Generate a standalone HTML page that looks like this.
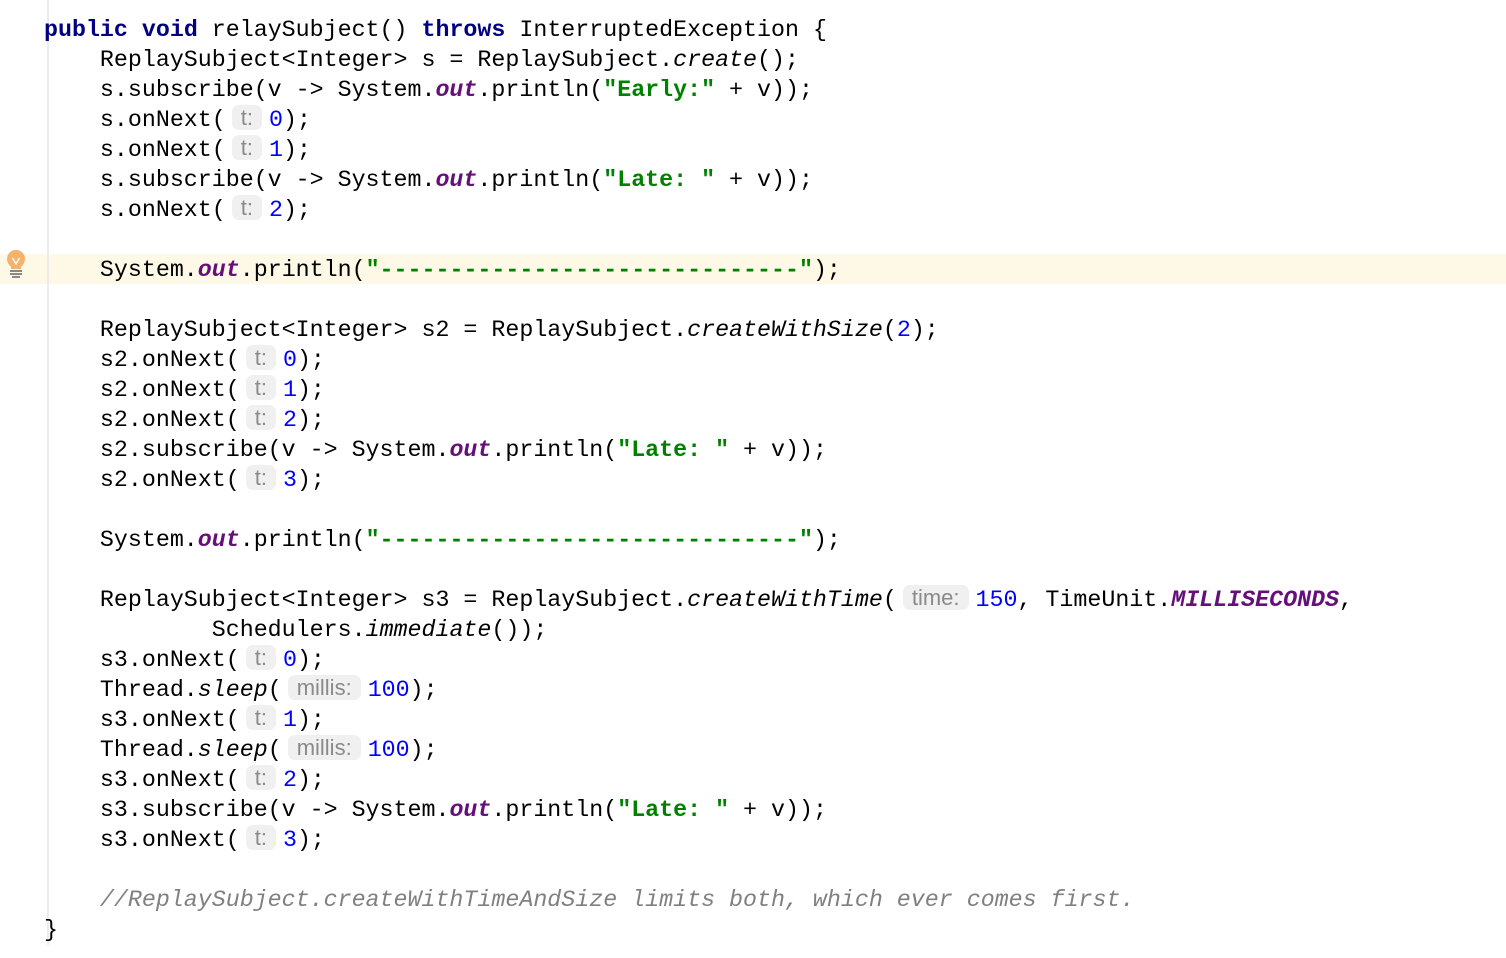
<!DOCTYPE html>
<html><head><meta charset="utf-8"><style>
html,body{margin:0;padding:0;background:#fff;width:1506px;height:958px;overflow:hidden}
.g{position:absolute;left:47px;top:0;width:2px;height:945px;background:#ececec}
.hl{position:absolute;left:0;top:254px;width:1506px;height:30px;background:#fdf9e6}
pre{position:absolute;left:44px;top:15px;margin:0;font-family:"Liberation Mono",monospace;font-size:23.3px;line-height:30px;color:#000}
.k{color:#000080;font-weight:bold}
.n{color:#0000ff}
.s{color:#008000;font-weight:bold}
.o{color:#660e7a;font-weight:bold;font-style:italic}
.i{font-style:italic}
.c{color:#808080;font-style:italic}
.m{color:#660e7a;font-weight:bold;font-style:italic}
.h{display:inline-block;font-family:"Liberation Sans",sans-serif;font-size:22px;line-height:25px;color:#8a8a8a;background:#f0f0f0;border-radius:7px;padding:0 9px;margin:0 7px 0 6px;vertical-align:1px}
.bulb{position:absolute;left:4px;top:249px}
</style></head><body>
<div class="hl"></div>
<div class="g"></div>
<svg class="bulb" width="24" height="30" viewBox="0 0 24 30"><circle cx="12" cy="10" r="9" fill="#f5b26b"/><rect x="7" y="15" width="10" height="5" fill="#f5b26b"/><path d="M8.5 9l3.5 6 3.5-6" stroke="#fff" stroke-width="1.4" fill="none"/><rect x="6" y="21" width="12" height="2" fill="#888"/><rect x="6" y="24" width="12" height="2" fill="#888"/><rect x="8" y="27" width="8" height="2" fill="#888"/></svg>
<pre><span class="k">public</span> <span class="k">void</span> relaySubject() <span class="k">throws</span> InterruptedException {
    ReplaySubject&lt;Integer&gt; s = ReplaySubject.<span class="i">create</span>();
    s.subscribe(v -&gt; System.<span class="o">out</span>.println(<span class="s">"Early:"</span> + v));
    s.onNext(<span class="h">t:</span><span class="n">0</span>);
    s.onNext(<span class="h">t:</span><span class="n">1</span>);
    s.subscribe(v -&gt; System.<span class="o">out</span>.println(<span class="s">"Late: "</span> + v));
    s.onNext(<span class="h">t:</span><span class="n">2</span>);

    System.<span class="o">out</span>.println(<span class="s">"------------------------------"</span>);

    ReplaySubject&lt;Integer&gt; s2 = ReplaySubject.<span class="i">createWithSize</span>(<span class="n">2</span>);
    s2.onNext(<span class="h">t:</span><span class="n">0</span>);
    s2.onNext(<span class="h">t:</span><span class="n">1</span>);
    s2.onNext(<span class="h">t:</span><span class="n">2</span>);
    s2.subscribe(v -&gt; System.<span class="o">out</span>.println(<span class="s">"Late: "</span> + v));
    s2.onNext(<span class="h">t:</span><span class="n">3</span>);

    System.<span class="o">out</span>.println(<span class="s">"------------------------------"</span>);

    ReplaySubject&lt;Integer&gt; s3 = ReplaySubject.<span class="i">createWithTime</span>(<span class="h">time:</span><span class="n">150</span>, TimeUnit.<span class="m">MILLISECONDS</span>,
            Schedulers.<span class="i">immediate</span>());
    s3.onNext(<span class="h">t:</span><span class="n">0</span>);
    Thread.<span class="i">sleep</span>(<span class="h">millis:</span><span class="n">100</span>);
    s3.onNext(<span class="h">t:</span><span class="n">1</span>);
    Thread.<span class="i">sleep</span>(<span class="h">millis:</span><span class="n">100</span>);
    s3.onNext(<span class="h">t:</span><span class="n">2</span>);
    s3.subscribe(v -&gt; System.<span class="o">out</span>.println(<span class="s">"Late: "</span> + v));
    s3.onNext(<span class="h">t:</span><span class="n">3</span>);

    <span class="c">//ReplaySubject.createWithTimeAndSize limits both, which ever comes first.</span>
}</pre>
</body></html>
